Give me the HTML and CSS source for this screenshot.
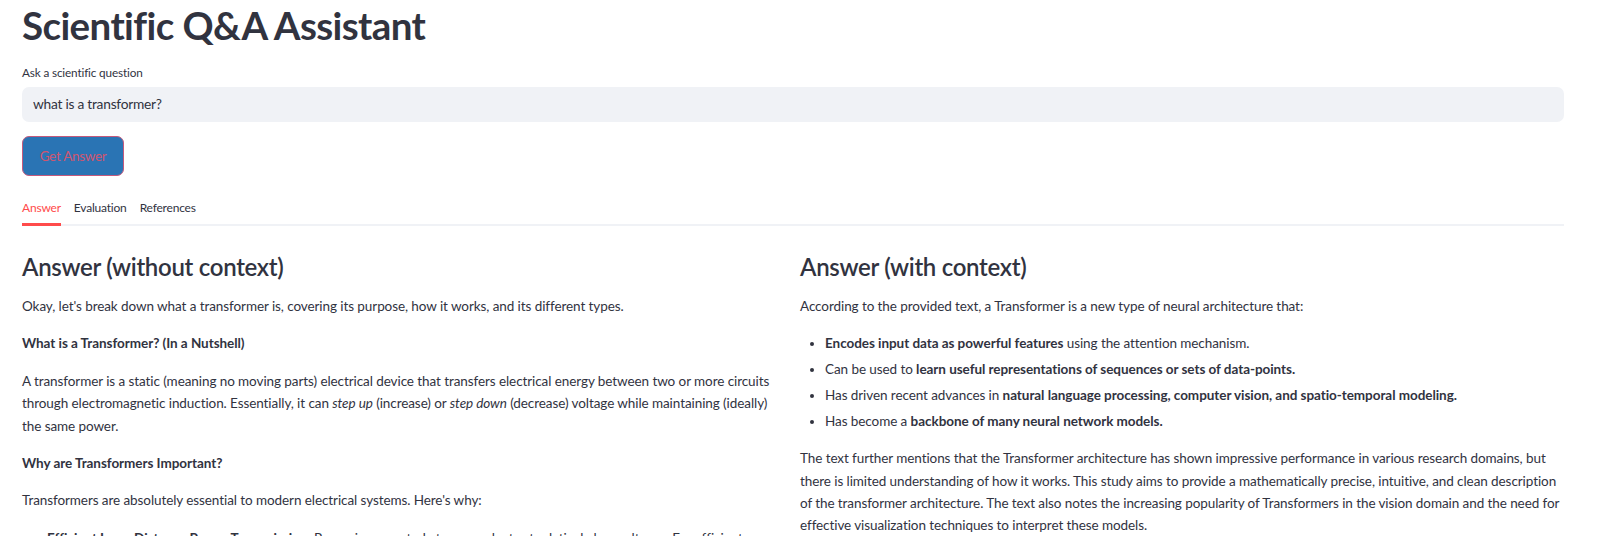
FILE: index.html
```html
<!DOCTYPE html>
<html lang="en">
<head>
<meta charset="utf-8">
<title>Scientific Q&amp;A Assistant</title>
<link rel="stylesheet" href="styles.css">
</head>
<body>
<main class="page">
  <h1 class="title">Scientific Q&amp;A Assistant</h1>
  <label class="field-label" for="q">Ask a scientific question</label>
  <div class="input-box"><input id="q" class="input" type="text" value="what is a transformer?"></div>
  <button class="btn" type="button">Get Answer</button>

  <nav class="tabs">
    <span class="tab active">Answer</span>
    <span class="tab">Evaluation</span>
    <span class="tab">References</span>
  </nav>

  <section class="columns">
    <div class="col">
      <h3 class="h3">Answer (without context)</h3>
      <p>Okay, let's break down what a transformer is, covering its purpose, how it works, and its different types.</p>
      <p><strong>What is a Transformer? (In a Nutshell)</strong></p>
      <p>A transformer is a static (meaning no moving parts) electrical device that transfers electrical energy between two or more circuits<br>through electromagnetic induction. Essentially, it can <em>step up</em> (increase) or <em>step down</em> (decrease) voltage while maintaining (ideally)<br>the same power.</p>
      <p><strong>Why are Transformers Important?</strong></p>
      <p>Transformers are absolutely essential to modern electrical systems. Here's why:</p>
      <ul>
        <li><strong>Efficient Long-Distance Power Transmission:</strong> Power is generated at power plants at relatively low voltages. For efficient<br>transmission over long distances, the voltage is stepped up to very high levels to reduce current and therefore losses.</li>
      </ul>
    </div>
    <div class="col">
      <h3 class="h3">Answer (with context)</h3>
      <p>According to the provided text, a Transformer is a new type of neural architecture that:</p>
      <ul>
        <li><strong>Encodes input data as powerful features</strong> using the attention mechanism.</li>
        <li>Can be used to <strong>learn useful representations of sequences or sets of data-points.</strong></li>
        <li>Has driven recent advances in <strong>natural language processing, computer vision, and spatio-temporal modeling.</strong></li>
        <li>Has become a <strong>backbone of many neural network models.</strong></li>
      </ul>
      <p>The text further mentions that the Transformer architecture has shown impressive performance in various research domains, but<br>there is limited understanding of how it works. This study aims to provide a mathematically precise, intuitive, and clean description<br>of the transformer architecture. The text also notes the increasing popularity of Transformers in the vision domain and the need for<br>effective visualization techniques to interpret these models.</p>
    </div>
  </section>
</main>
</body>
</html>
```

FILE: styles.css
```css
* { box-sizing: border-box; }
html, body { margin: 0; padding: 0; background: #ffffff; }
body {
  font-family: Lato, "Noto Sans", sans-serif;
  color: #31333f;
  font-size: 13.5px;
  line-height: 22.4px;
  letter-spacing: -0.08px;
  overflow: hidden;
}
.page {
  padding: 2px 36px 0 22px;
  display: flex;
  flex-direction: column;
  align-items: stretch;
}
.title {
  margin: 0;
  font-size: 38.5px;
  line-height: 46px;
  font-weight: 700;
  letter-spacing: -0.6px;
}
.field-label {
  margin-top: 15px;
  font-size: 11.75px;
  line-height: 19px;
  letter-spacing: -0.15px;
}
.input-box {
  margin-top: 5px;
  height: 35px;
  background: #f0f2f6;
  border-radius: 7px;
  display: flex;
  align-items: center;
}
.input {
  border: 0;
  outline: 0;
  background: transparent;
  font: inherit;
  letter-spacing: -0.25px;
  color: #31333f;
  font-size: 13.75px;
  padding: 0 11px;
  width: 100%;
}
.btn {
  align-self: flex-start;
  margin-top: 14px;
  width: 102px;
  height: 40px;
  background: #2a74b4;
  border: 1px solid #c45a7d;
  border-radius: 7px;
  color: #cf5670;
  font: inherit;
  font-size: 13.5px;
  letter-spacing: -0.3px;
}
.tabs {
  margin-top: 16px;
  display: flex;
  gap: 13px;
  border-bottom: 2px solid #f0f2f6;
  height: 34px;
}
.tab {
  font-size: 12px;
  letter-spacing: -0.2px;
  line-height: 32px;
  height: 32px;
  position: relative;
}
.tab.active { color: #ff4b4b; }
.tab.active::after {
  content: "";
  position: absolute;
  left: 0; right: 0; bottom: -2px;
  height: 3px;
  background: #ff4b4b;
}
.columns {
  margin-top: 26px;
  display: grid;
  grid-template-columns: 1fr 1fr;
  gap: 14px;
}
.h3 {
  margin: 0 0 14px;
  font-size: 24px;
  line-height: 29px;
  font-weight: 600;
  letter-spacing: -0.3px;
}
p { margin: 0 0 15px; }
strong { font-weight: 700; letter-spacing: -0.05px; }
ul { margin: 0 0 15px; padding-left: 25px; }
li { margin: 3.4px 0; }
li:first-child { margin-top: 0; }
```
